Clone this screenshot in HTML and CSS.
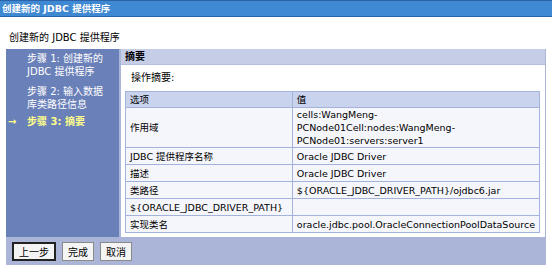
FILE: index.html
```html
<!DOCTYPE html>
<html lang="zh-CN">
<head>
    <meta charset="UTF-8">
    <title>创建新的 JDBC 提供程序</title>
    <link rel="stylesheet" href="styles.css">
</head>
<body>
    <div class="titlebar">创建新的 JDBC 提供程序</div>
    <h1 class="page-title">创建新的 JDBC 提供程序</h1>

    <div class="wizard">
        <div class="wizard-main">
            <ul class="steps">
                <li>步骤 1: 创建新的<br>JDBC 提供程序</li>
                <li>步骤 2: 输入数据<br>库类路径信息</li>
                <li class="current"><span class="arrow">&rarr;</span>步骤 3: 摘要</li>
            </ul>

            <div class="content">
                <div class="content-head">摘要</div>
                <div class="content-body">
                    <p class="summary-label">操作摘要:</p>
                    <table class="summary">
                        <thead>
                            <tr>
                                <th class="col-opt">选项</th>
                                <th>值</th>
                            </tr>
                        </thead>
                        <tbody>
                            <tr>
                                <td>作用域</td>
                                <td>cells:WangMeng-<br>PCNode01Cell:nodes:WangMeng-<br>PCNode01:servers:server1</td>
                            </tr>
                            <tr>
                                <td>JDBC 提供程序名称</td>
                                <td>Oracle JDBC Driver</td>
                            </tr>
                            <tr>
                                <td>描述</td>
                                <td>Oracle JDBC Driver</td>
                            </tr>
                            <tr>
                                <td>类路径</td>
                                <td>${ORACLE_JDBC_DRIVER_PATH}/ojdbc6.jar</td>
                            </tr>
                            <tr>
                                <td>${ORACLE_JDBC_DRIVER_PATH}</td>
                                <td></td>
                            </tr>
                            <tr>
                                <td>实现类名</td>
                                <td>oracle.jdbc.pool.OracleConnectionPoolDataSource</td>
                            </tr>
                        </tbody>
                    </table>
                </div>
            </div>
        </div>

        <div class="buttons">
            <button class="btn btn-default">上一步</button>
            <button class="btn">完成</button>
            <button class="btn">取消</button>
        </div>
    </div>
</body>
</html>
```

FILE: styles.css
```css
body {
    margin: 0;
    padding: 0;
    background-color: #fff;
    font-family: "DejaVu Sans", "Noto Sans CJK SC", sans-serif;
    font-size: 9.5px;
    color: #000;
}
.titlebar {
    height: 15px;
    line-height: 15px;
    margin-right: 2px;
    padding-left: 2px;
    background-color: #3f88d2;
    border-top: 1px solid #2b62a8;
    border-bottom: 1px solid #2b62a8;
    color: #fff;
    font-weight: bold;
    font-size: 9.5px;
}
.page-title {
    margin: 0;
    padding: 12px 0 0 9px;
    height: 20px;
    font-size: 10px;
    font-weight: normal;
}
.wizard {
    margin-left: 6px;
    width: 540px;
    background-color: #aab5d8;
}
.wizard-main {
    display: flex;
    gap: 2px;
    height: 188px;
}
.steps {
    width: 113px;
    margin: 0;
    padding: 3px 0 0 0;
    list-style: none;
    background-color: #6a80b8;
    color: #fff;
    font-size: 10px;
    line-height: 13px;
}
.steps li {
    padding-left: 21px;
    margin-bottom: 7px;
}
.steps li:nth-child(2) {
    margin-bottom: 4px;
}
.steps li.current {
    padding-left: 2px;
    color: #ffff8c;
    font-weight: bold;
}
.steps .arrow {
    display: inline-block;
    width: 19px;
}
.content {
    flex: 1;
    margin-right: 1px;
    display: flex;
    flex-direction: column;
    background-color: #fff;
}
.content-head {
    height: 15px;
    line-height: 15px;
    padding-left: 4px;
    background-color: #c5cde7;
    border-bottom: 1px solid #b3bedf;
    font-weight: bold;
    font-size: 10px;
}
.content-body {
    flex: 1;
    padding: 4px 0 0 4px;
}
.summary-label {
    margin: 0 0 4px 6px;
    line-height: 18px;
    font-size: 10px;
}
.summary {
    width: 415px;
    border-collapse: collapse;
    border: 1px solid #a4b3dc;
}
.summary th, .summary td {
    border: 1px solid #a4b3dc;
    padding: 0 4px;
    height: 16px;
    line-height: 13px;
    text-align: left;
    font-weight: normal;
    background-color: #f5f6fb;
}
.summary th {
    height: 15px;
    background-color: #c9d3ee;
}
.summary .col-opt {
    width: 165px;
}
.buttons {
    height: 28px;
    display: flex;
    align-items: center;
    gap: 6px;
    padding-left: 6px;
}
.btn {
    height: 19px;
    padding: 0 5px;
    font-family: "DejaVu Sans", "Noto Sans CJK SC", sans-serif;
    font-size: 10px;
    background-color: #f4f4f4;
    border: 1px solid #8a8a8a;
    border-radius: 0;
    cursor: pointer;
}
.btn-default {
    padding: 0 5px;
    border: 2px solid #222;
}
```
